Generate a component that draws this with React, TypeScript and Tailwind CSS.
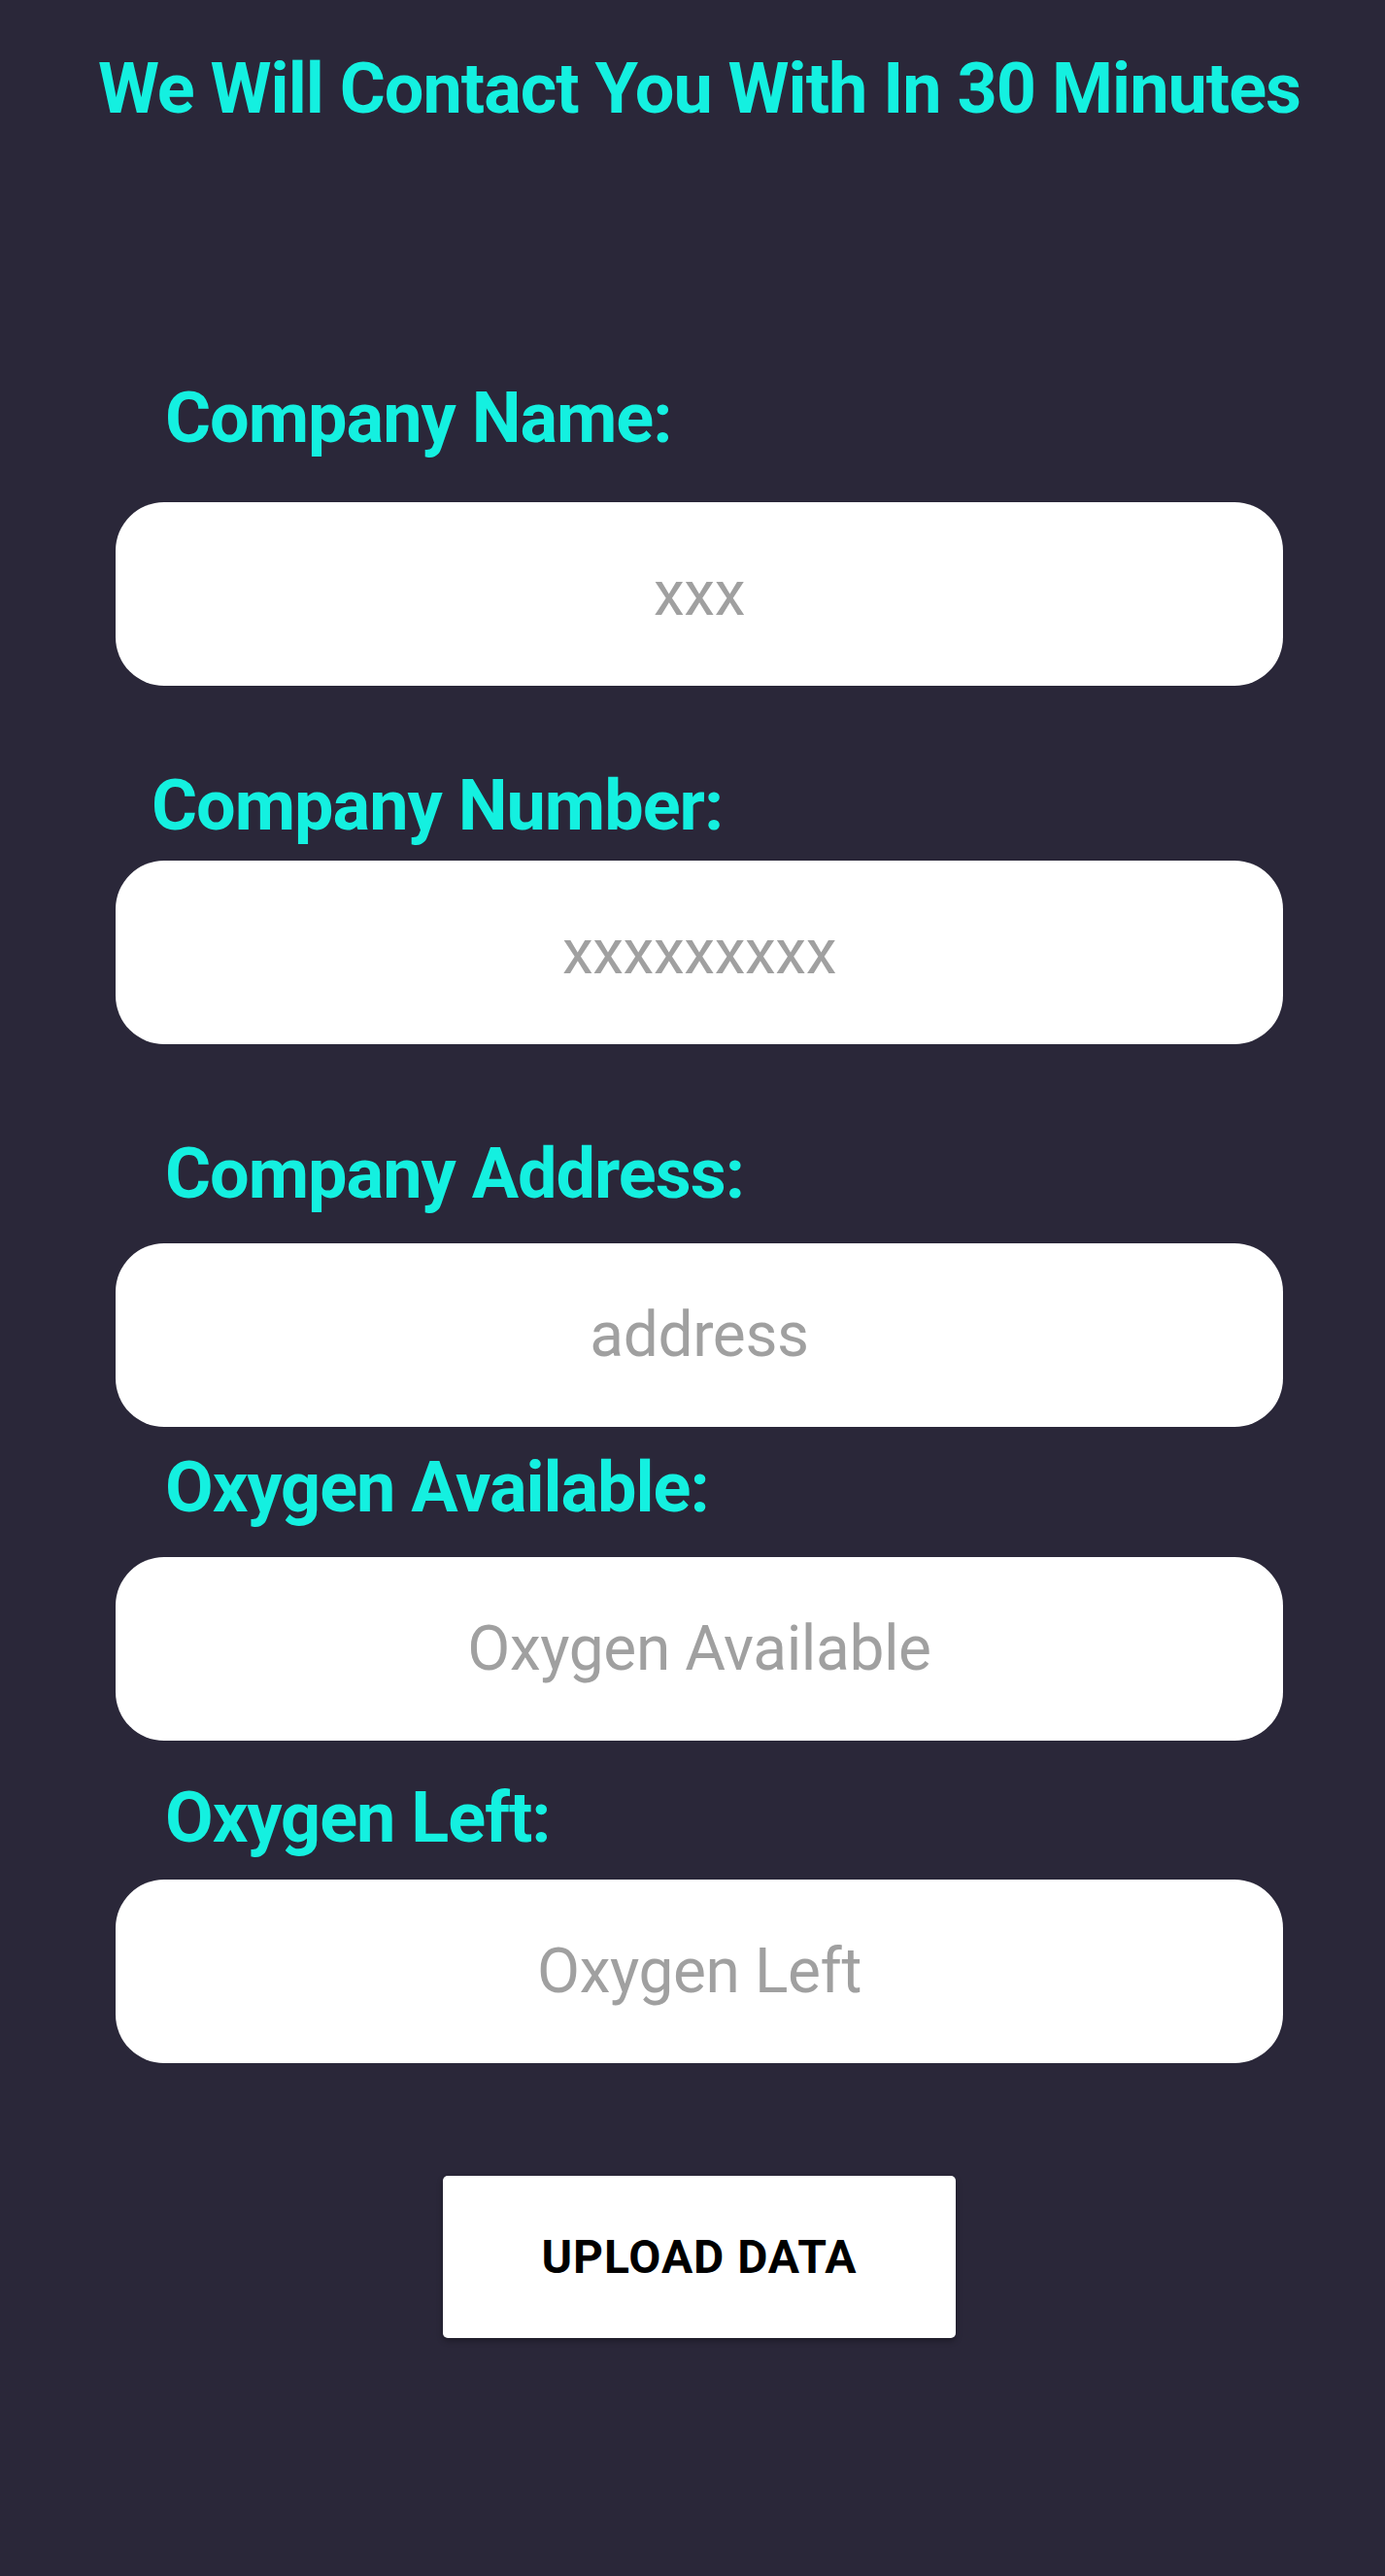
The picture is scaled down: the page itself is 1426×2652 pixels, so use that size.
const fields = [
  { label: 'Company Name:', placeholder: 'xxx', labelClass: 'mt-[267px] ml-[51px]', inputClass: 'mt-[50px]' },
  { label: 'Company Number:', placeholder: 'xxxxxxxxx', labelClass: 'mt-[88px] ml-[37px]', inputClass: 'mt-[20px]' },
  { label: 'Company Address:', placeholder: 'address', labelClass: 'mt-[98px] ml-[51px]', inputClass: 'mt-[35px]' },
  { label: 'Oxygen Available:', placeholder: 'Oxygen Available', labelClass: 'mt-[27px] ml-[51px]', inputClass: 'mt-[35px]' },
  { label: 'Oxygen Left:', placeholder: 'Oxygen Left', labelClass: 'mt-[44px] ml-[51px]', inputClass: 'mt-[27px]' },
]

export default function App() {
  return (
    <div className="min-h-screen bg-[#2a2739] font-['Roboto',sans-serif] pl-[14px]">
      {/* Header */}
      <h1 className="pt-[56px] text-center text-[72px] leading-[72px] tracking-[-1px] font-bold text-[#14f0e0]">
        We Will Contact You With In 30 Minutes
      </h1>

      {/* Form */}
      <div className="w-[1202px] mx-auto flex flex-col">
        {fields.map((f) => (
          <div key={f.label} className="flex flex-col">
            <label className={`${f.labelClass} text-[72px] leading-[72px] tracking-[-1px] font-bold text-[#14f0e0]`}>
              {f.label}
            </label>
            <input
              type="text"
              placeholder={f.placeholder}
              className={`${f.inputClass} h-[189px] w-full rounded-[50px] bg-white text-center text-[64px] tracking-[-0.4px] text-gray-800 placeholder:text-[#a0a0a0] outline-none`}
            />
          </div>
        ))}

        {/* Upload button */}
        <div className="flex justify-center mt-[116px] pb-[245px]">
          <button className="w-[528px] h-[167px] bg-white rounded-[5px] shadow-[0_3px_6px_rgba(0,0,0,0.3)] text-[48px] font-bold uppercase tracking-[0.02em] text-black">
            Upload Data
          </button>
        </div>
      </div>
    </div>
  )
}
